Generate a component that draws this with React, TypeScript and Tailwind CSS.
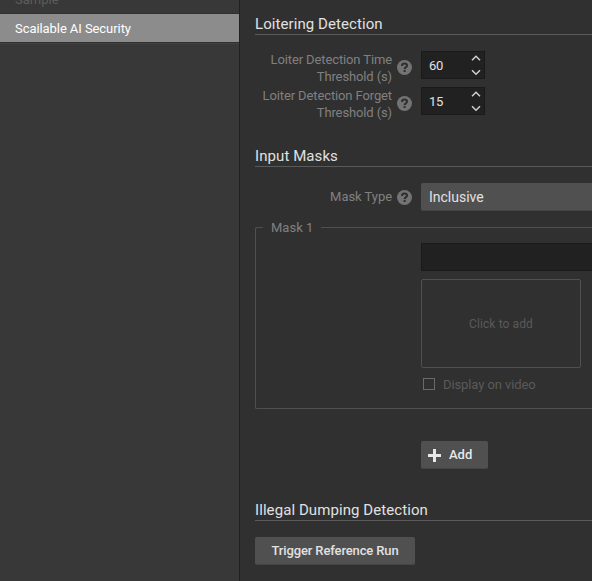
import type { ReactNode } from "react";

function SectionTitle({ children }: { children: ReactNode }) {
  return (
    <h2 className="h-[23px] border-b border-[#5a5a5a] text-[15px] leading-[25px] tracking-[0.08px] whitespace-nowrap text-[#e1e1e1]">
      {children}
    </h2>
  );
}

function HelpIcon() {
  return (
    <svg width="15" height="15" viewBox="0 0 15 15" className="block shrink-0">
      <circle cx="7.5" cy="7.5" r="7.5" fill="#737373" />
      <path d="M5 5.9C5 4.4 6 3.6 7.5 3.6s2.6.8 2.6 2c0 1.5-2.4 1.5-2.5 3.5" fill="none" stroke="#303030" strokeWidth="2" />
      <rect x="6.6" y="10" width="2" height="2" fill="#303030" />
    </svg>
  );
}

function NumberField({ label, value }: { label: string; value: number }) {
  return (
    <div className="flex h-9">
      <div className="w-[137px] shrink-0 text-right text-[13px] leading-[17px] tracking-[-0.12px] whitespace-nowrap text-[#808080]">
        <div>{label}</div>
        <div>Threshold (s)</div>
      </div>
      <div className="ml-[5px] pt-[9px]">
        <HelpIcon />
      </div>
      <div className="ml-[9px] flex h-7 w-16 justify-between border border-[#1a1a1a] bg-[#212121] pr-[3px] pl-[7px]">
        <span className="text-[13px] leading-[27px] tracking-[-0.2px] text-[#e1e1e1]">{value}</span>
        <svg width="11" height="26" viewBox="0 0 11 26" fill="none" stroke="#d0d0d0" strokeWidth="1.5">
          <path d="M2 8.3 6 4.3l4 4M2 18.3l4 4 4-4" />
        </svg>
      </div>
    </div>
  );
}

export default function App() {
  return (
    <div className="flex h-[581px] w-[592px] overflow-hidden bg-[#303030] font-[Roboto,sans-serif]">
      <aside className="w-60 shrink-0 border-r border-[#212121] bg-[#383838] text-[13px]">
        <div className="flex h-[14px] items-end border-b border-[#303030] pl-[15px] leading-[20px] text-[#5c5c5c]">
          <span className="mb-[3px]">Sample</span>
        </div>
        <div className="h-7 bg-[#8c8c8c] pl-[15px] leading-[29px] tracking-[-0.07px] text-white">Scailable AI Security</div>
        <div className="h-0.5 border-t border-b border-t-[#303030] border-b-[#424242]" />
      </aside>
      <main className="w-[352px] shrink-0 pt-3 pl-[15px]">
        <SectionTitle>Loitering Detection</SectionTitle>
        <div className="pt-4">
          <NumberField label="Loiter Detection Time" value={60} />
          <NumberField label="Loiter Detection Forget" value={15} />
        </div>

        <div className="mt-[21px]">
          <SectionTitle>Input Masks</SectionTitle>
        </div>
        <div className="mt-4 flex h-7 items-center">
          <span className="w-[137px] text-right text-[13px] leading-[28px] tracking-[-0.05px] text-[#808080]">Mask Type</span>
          <div className="mr-[9px] ml-[5px]">
            <HelpIcon />
          </div>
          <div className="h-7 grow rounded-l-[2px] border-b border-[#454545] bg-[#505050] pl-2 text-[14px] leading-7 text-[#e1e1e1]">
            Inclusive
          </div>
        </div>

        <fieldset className="mt-2 h-[190px] rounded-l-[2px] border-y border-l border-[#505050]">
          <legend className="ml-[7px] h-[17px] px-2 text-[13px] leading-[17px] text-[#808080]">
            Mask 1
          </legend>
          <div className="mt-[7px] ml-[165px]">
            <div className="h-7 border-y border-l border-[#1a1a1a] bg-[#212121]" />
            <div className="mt-2 flex h-[89px] w-40 items-center justify-center rounded-[2px] border border-[#505050] text-[12px] tracking-[0.1px] text-[#5a5a5a]">
              Click to add
            </div>
            <div className="mt-2 flex h-4 items-center pl-0.5 text-[13px] tracking-[-0.1px] text-[#5a5a5a]">
              <span className="mr-2 size-3 border border-[#6a6a6a]" />
              <span className="pt-0.5">Display on video</span>
            </div>
          </div>
        </fieldset>

        <button className="mt-8 ml-[166px] flex h-7 w-[67px] items-center rounded-[2px] border-b border-[#454545] bg-[#505050] pl-[7px] text-[13px] font-medium text-[#e8e8e8]">
          <svg width="13" height="13" viewBox="0 0 13 13" className="mr-2 block translate-y-px" fill="#e8e8e8">
            <path d="M5 0h3v5h5v3H8v5H5V8H0V5h5z" />
          </svg>
          <span className="pt-px">Add</span>
        </button>

        <div className="mt-[29px]">
          <SectionTitle>Illegal Dumping Detection</SectionTitle>
        </div>
        <button className="mt-4 block h-7 w-40 rounded-[2px] border-b border-[#454545] bg-[#505050] text-[13px] leading-[27px] font-medium tracking-[-0.13px] whitespace-nowrap text-[#e1e1e1]">
          Trigger Reference Run
        </button>
      </main>
    </div>
  );
}
